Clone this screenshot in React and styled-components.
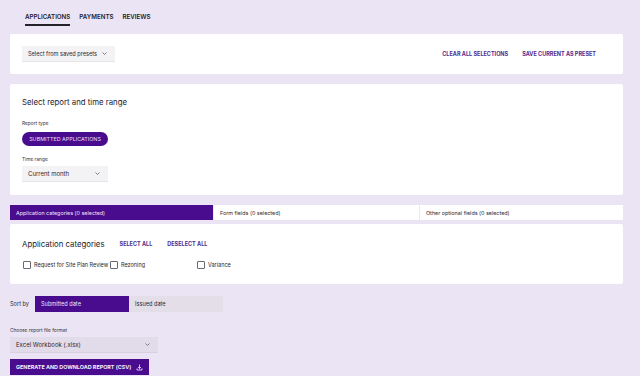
import styled, { createGlobalStyle } from "styled-components";

const Global = createGlobalStyle`
  html, body {
    margin: 0;
    padding: 0;
    background: #ebe4f4;
    font-family: Inter, "Liberation Sans", sans-serif;
    color: #2a2830;
  }
`;

const PURPLE = "#4a0c8f";

const Page = styled.div`
  width: 640px;
  height: 376px;
  padding: 0 17px 0 10px;
  box-sizing: border-box;
  overflow: hidden;
`;

const Nav = styled.nav`
  display: flex;
  gap: 9px;
  height: 34px;
  padding-left: 15px;
  align-items: flex-start;
  padding-top: 13px;
  box-sizing: border-box;
`;

const NavTab = styled.div`
  font-size: 6.2px;
  font-weight: 600;
  color: #23212a;
  padding-bottom: 2px;
  height: 9px;
  border-bottom: 2px solid ${(p) => (p.$active ? "#23212a" : "transparent")};
`;

const Card = styled.section`
  background: #fff;
  border-radius: 2px;
  padding: ${(p) => p.$pad || "12px"};
  margin-bottom: ${(p) => p.$mb || "10px"};
`;

const PresetRow = styled.div`
  display: flex;
  align-items: center;
  justify-content: space-between;
  height: 16px;
`;

const Links = styled.div`
  display: flex;
  gap: 14px;
  padding-right: 15px;
`;

const LinkBtn = styled.span`
  font-size: 5.5px;
  font-weight: 700;
  color: #4f2d90;
  white-space: nowrap;
`;

const Select = styled.div`
  display: flex;
  align-items: center;
  justify-content: space-between;
  width: ${(p) => p.$w}px;
  height: 16px;
  padding: 0 8px 0 ${(p) => p.$pl || 6}px;
  box-sizing: border-box;
  background: ${(p) => (p.$dark ? "#e2dbe9" : "#f3f2f4")};
  border-bottom: 1px solid ${(p) => (p.$dark ? "#d8d0e0" : "#e6e4e8")};
  font-size: ${(p) => p.$fs || 5.6}px;
  color: #2a2830;
`;

const Title = styled.h2`
  margin: 0;
  font-size: 7.8px;
  font-weight: 400;
  color: #24222a;
`;

const Label = styled.div`
  font-size: 4.8px;
  color: #34323a;
  margin: ${(p) => p.$m || "0"};
`;

const Pill = styled.button`
  display: block;
  border: none;
  background: ${PURPLE};
  color: #e6dcf5;
  font-family: inherit;
  font-size: 5.4px;
  height: 14px;
  width: 86px;
  border-radius: 7px;
  padding: 0;
`;

const TabBar = styled.div`
  display: grid;
  grid-template-columns: 203px 206px 1fr;
  height: 15px;
  background: #fff;
  margin-bottom: 4px;
`;

const Tab = styled.div`
  display: flex;
  align-items: center;
  padding-left: 6px;
  font-size: 5.4px;
  color: ${(p) => (p.$active ? "#efe6fb" : "#2a2830")};
  background: ${(p) => (p.$active ? PURPLE : "#fff")};
  border-left: ${(p) => (p.$first ? "none" : "1px solid #ece8f0")};
`;

const CatHead = styled.div`
  display: flex;
  align-items: center;
  gap: 15px;
`;

const Checks = styled.div`
  display: grid;
  grid-template-columns: 87px 87px 87px;
  margin-top: 12px;
  padding-left: 1px;
`;

const Check = styled.label`
  display: flex;
  align-items: center;
  gap: 3px;
  font-size: 5.5px;
  color: #2a2830;
  white-space: nowrap;
`;

const Box = styled.span`
  width: 6px;
  height: 6px;
  border: 0.8px solid #6c6872;
  border-radius: 1px;
  background: #fff;
  flex: none;
`;

const SortRow = styled.div`
  display: flex;
  align-items: center;
  margin-top: 12px;
  height: 16px;
`;

const SortLabel = styled.span`
  font-size: 5.6px;
  width: 25px;
`;

const SortBtn = styled.div`
  width: 94px;
  height: 16px;
  display: flex;
  align-items: center;
  padding-left: 6px;
  box-sizing: border-box;
  font-size: 5.6px;
  background: ${(p) => (p.$active ? PURPLE : "#e4dee9")};
  color: ${(p) => (p.$active ? "#efe6fb" : "#2a2830")};
`;

const Generate = styled.button`
  display: flex;
  align-items: center;
  gap: 5px;
  margin-top: 6px;
  height: 16px;
  width: 139px;
  border: none;
  padding: 0 0 0 6px;
  background: ${PURPLE};
  color: #f3ecfc;
  font-family: inherit;
  font-size: 5.4px;
  font-weight: 700;
  white-space: nowrap;
`;

const Chevron = () => (
  <svg width="5" height="3" viewBox="0 0 10 6" fill="none">
    <path d="M1 1l4 4 4-4" stroke="#55525b" strokeWidth="1.4" />
  </svg>
);

const Download = () => (
  <svg width="7" height="7" viewBox="0 0 14 14" fill="none" stroke="#f3ecfc" strokeWidth="1.6">
    <path d="M7 1v8M4 6l3 3 3-3M2 9v3h10V9" />
  </svg>
);

export default function App() {
  return (
    <Page>
      <Global />
      <Nav>
        <NavTab $active>APPLICATIONS</NavTab>
        <NavTab>PAYMENTS</NavTab>
        <NavTab>REVIEWS</NavTab>
      </Nav>

      <Card>
        <PresetRow>
          <Select $w={93}>
            Select from saved presets <Chevron />
          </Select>
          <Links>
            <LinkBtn>CLEAR ALL SELECTIONS</LinkBtn>
            <LinkBtn>SAVE CURRENT AS PRESET</LinkBtn>
          </Links>
        </PresetRow>
      </Card>

      <Card $pad="13px 12px 13px">
        <Title>Select report and time range</Title>
        <Label $m="13px 0 6px">Report type</Label>
        <Pill>SUBMITTED APPLICATIONS</Pill>
        <Label $m="10px 0 4px">Time range</Label>
        <Select $w={86} $fs={6}>
          Current month <Chevron />
        </Select>
      </Card>

      <TabBar>
        <Tab $active $first>Application categories (0 selected)</Tab>
        <Tab>Form fields (0 selected)</Tab>
        <Tab>Other optional fields (0 selected)</Tab>
      </TabBar>

      <Card $pad="15px 12px 15px" $mb="0">
        <CatHead>
          <Title>Application categories</Title>
          <LinkBtn>SELECT ALL</LinkBtn>
          <LinkBtn>DESELECT ALL</LinkBtn>
        </CatHead>
        <Checks>
          <Check><Box />Request for Site Plan Review</Check>
          <Check><Box />Rezoning</Check>
          <Check><Box />Variance</Check>
        </Checks>
      </Card>

      <SortRow>
        <SortLabel>Sort by</SortLabel>
        <SortBtn $active>Submitted date</SortBtn>
        <SortBtn>Issued date</SortBtn>
      </SortRow>

      <Label $m="15px 0 4px">Choose report file format</Label>
      <Select $w={148} $dark $fs={6}>
        Excel Workbook (.xlsx) <Chevron />
      </Select>
      <Generate>
        GENERATE AND DOWNLOAD REPORT (CSV) <Download />
      </Generate>
    </Page>
  );
}
